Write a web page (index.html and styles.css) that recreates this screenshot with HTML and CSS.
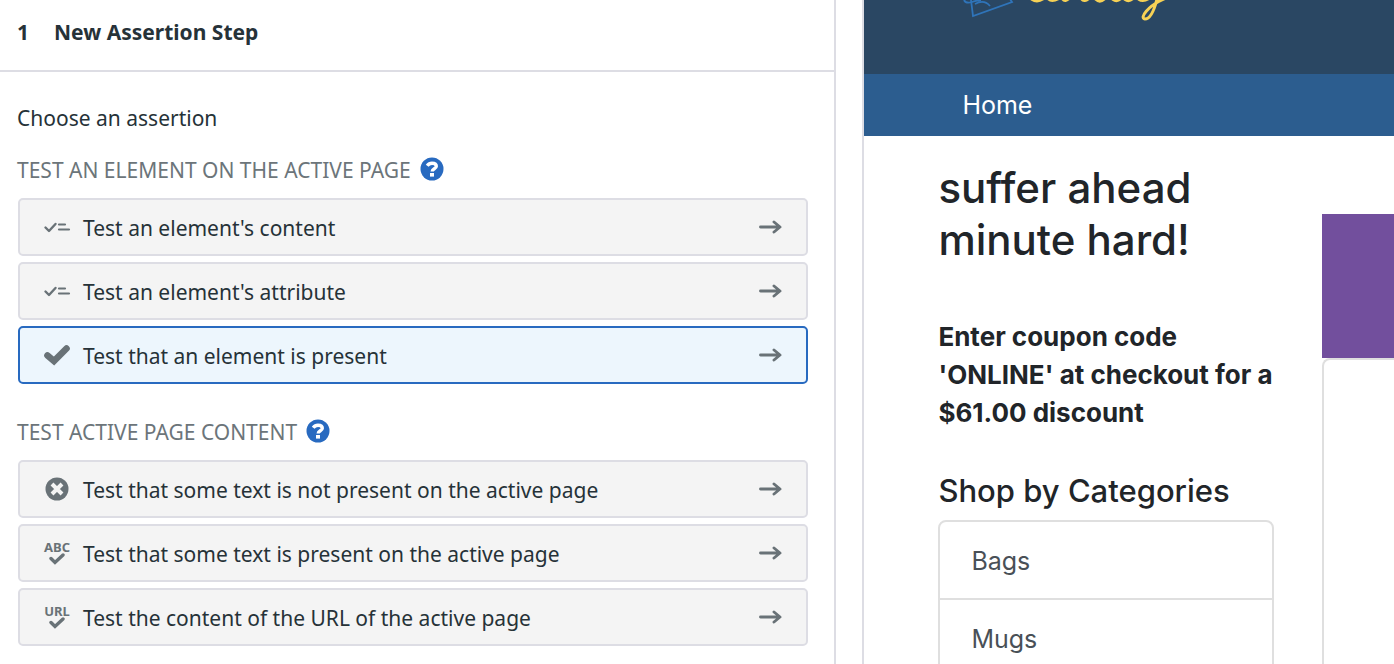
FILE: index.html
```html
<!DOCTYPE html>
<html lang="en">
<head>
<meta charset="utf-8">
<meta name="viewport" content="width=device-width, initial-scale=1">
<title>New Assertion Step</title>
<link rel="stylesheet" href="styles.css">
</head>
<body>
<svg class="sprite" aria-hidden="true">
  <symbol id="arrow" viewBox="0 0 24 24"><path d="M1.500 12H20M15 7l6 5-6 5" fill="none" stroke="currentColor" stroke-width="2.900" stroke-linejoin="round" stroke-linecap="round"/></symbol>
  <symbol id="help" viewBox="0 0 24 24"><circle cx="12" cy="12" r="11.500" fill="currentColor"/><path d="M7.200 8.700Q9 6.200 12 6.200C14.600 6.200 16.300 7.300 16.300 9.200C16.300 11.900 12.200 11.700 12.200 14.600" fill="none" stroke="#fff" stroke-width="3.400"/><rect x="10" y="16" width="4" height="3.600" fill="#fff"/></symbol>
  <symbol id="checklist" viewBox="0 0 28 24"><path d="M2.500 12.500l3.500 3.500 6.500-7" fill="none" stroke="currentColor" stroke-width="2.400" stroke-linecap="round" stroke-linejoin="round"/><path d="M16 9.500h6M16 14.500h10" stroke="currentColor" stroke-width="2.200" stroke-linecap="round"/></symbol>
  <symbol id="check" viewBox="0 0 28 24"><path d="M4.500 12.500l6.500 5.500L23.500 5.500" fill="none" stroke="currentColor" stroke-width="6.600" stroke-linecap="round" stroke-linejoin="miter"/></symbol>
  <symbol id="smallcheck" viewBox="0 0 16 12"><path d="M2 5.500l4 4L14 2" fill="none" stroke="currentColor" stroke-width="3.400" stroke-linecap="round" stroke-linejoin="miter"/></symbol>
  <symbol id="cross" viewBox="0 0 28 24"><circle cx="14" cy="12" r="11.500" fill="currentColor"/><path d="M9 7l10 10M19 7l-10 10" stroke="#f4f4f4" stroke-width="4"/></symbol>
</svg>
<div class="app">
  <main class="editor">
    <header class="editor-header"><span class="step-number">1</span><h1 class="step-title">New Assertion Step</h1></header>
    <div class="editor-body">
      <p class="prompt">Choose an assertion</p>
      <section class="group">
        <div class="group-heading"><h2 class="group-title">TEST AN ELEMENT ON THE ACTIVE PAGE</h2><button class="help" type="button" aria-label="Help with element tests"><svg class="help-icon"><use href="#help"/></svg></button></div>
        <div class="options">
          <button class="option" type="button"><span class="icon"><svg class="icon-svg"><use href="#checklist"/></svg></span><span class="label">Test an element's content</span><svg class="arrow"><use href="#arrow"/></svg></button>
          <button class="option" type="button"><span class="icon"><svg class="icon-svg"><use href="#checklist"/></svg></span><span class="label">Test an element's attribute</span><svg class="arrow"><use href="#arrow"/></svg></button>
          <button class="option selected" type="button" aria-pressed="true"><span class="icon"><svg class="icon-svg"><use href="#check"/></svg></span><span class="label">Test that an element is present</span><svg class="arrow"><use href="#arrow"/></svg></button>
        </div>
      </section>
      <section class="group">
        <div class="group-heading"><h2 class="group-title">TEST ACTIVE PAGE CONTENT</h2><button class="help" type="button" aria-label="Help with page content tests"><svg class="help-icon"><use href="#help"/></svg></button></div>
        <div class="options">
          <button class="option" type="button"><span class="icon"><svg class="icon-svg"><use href="#cross"/></svg></span><span class="label">Test that some text is not present on the active page</span><svg class="arrow"><use href="#arrow"/></svg></button>
          <button class="option" type="button"><span class="icon"><span class="icon-text">ABC</span><svg class="small-check"><use href="#smallcheck"/></svg></span><span class="label">Test that some text is present on the active page</span><svg class="arrow"><use href="#arrow"/></svg></button>
          <button class="option" type="button"><span class="icon"><span class="icon-text">URL</span><svg class="small-check"><use href="#smallcheck"/></svg></span><span class="label">Test the content of the URL of the active page</span><svg class="arrow"><use href="#arrow"/></svg></button>
        </div>
      </section>
    </div>
  </main>
  <div class="preview">
    <header class="banner">
      <svg class="logo" viewBox="0 0 210 22" aria-hidden="true">
        <g fill="none" stroke="#2f74b9" stroke-width="1.800"><path d="M9 0l2 16L50 2l-2-3"/><path d="M2 0q2 4 8 2t9-2M13 4q9-5 15 2"/></g>
        <g fill="none" stroke="#f6d155" stroke-width="3.600" stroke-linecap="round"><path d="M70-1q6 4 13-2M87-1q3 3 10-1M101-1q2 3 6-1M120-1q2 3 7-1M134-1q4 4 9-1M151-1q4 3 8-1M163-1q4 3 8-1M177-1q4 3 10-1"/><path d="M195-1Q190 19 183 19C177 18 186 6 202-1" stroke-width="3"/></g>
      </svg>
    </header>
    <nav class="site-nav"><a class="nav-link" href="#">Home</a></nav>
    <div class="shop">
      <aside class="sidebar">
        <h2 class="headline">suffer ahead minute hard!</h2>
        <p class="coupon">Enter coupon code 'ONLINE' at checkout for a $61.00 discount</p>
        <h3 class="shop-title">Shop by Categories</h3>
        <ul class="categories"><li><a class="category" href="#">Bags</a></li><li><a class="category" href="#">Mugs</a></li></ul>
      </aside>
      <div class="products"><div class="promo"></div><div class="product-card"></div></div>
    </div>
  </div>
</div>
</body>
</html>
```
FILE: styles.css
```css
* { box-sizing: border-box; }
body { margin: 0; background: #fff; color: #263238; font-family: "Noto Sans", sans-serif; font-size: 21px; line-height: 28px; }
h1, h2, h3, p, ul { margin: 0; padding: 0; }
button { font: inherit; color: inherit; cursor: pointer; }
.sprite { position: absolute; width: 0; height: 0; }
.app { display: grid; grid-template-columns: 60% 1fr; column-gap: 26px; height: 100vh; overflow: hidden; }
.editor { border-right: 2px solid #dddde4; }
.editor-header { display: flex; gap: 25px; padding: 18px 17px 24px; border-bottom: 2px solid #dddde4; font-weight: 700; }
.step-title { font-size: inherit; }
.editor-body { display: flex; flex-direction: column; padding: 32px 26px 18px 17px; }
.group { padding-top: 24px; }
.group + .group { padding-top: 34px; }
.group-heading { display: flex; align-items: center; gap: 9px; padding-bottom: 14px; }
.group-title { font-size: 21px; font-weight: 400; color: #6c757a; }
.help { display: flex; padding: 0 0 2px; border: 0; background: none; color: #286ac0; }
.help-icon { width: 24px; height: 24px; }
.options { display: flex; flex-direction: column; gap: 6px; padding-left: 1px; }
.option { display: flex; align-items: center; width: 100%; height: 58px; padding: 0 23px; border: 2px solid #dddde4; border-radius: 5px; background: #f4f4f4; text-align: left; }
.option.selected { border-color: #286ac0; background: #edf6fd; }
.icon { display: flex; flex-direction: column; align-items: center; width: 28px; margin-right: 12px; color: #697277; }
.icon-svg { width: 28px; height: 24px; }
.icon-text { font-size: 13px; line-height: 12px; font-weight: 700; }
.small-check { width: 16px; height: 12px; }
.label { flex: 1; padding-top: 1px; }
.arrow { width: 24px; height: 24px; color: #697277; }
.preview { min-width: 0; overflow: hidden; border-left: 2px solid #dddde4; font-family: Inter, sans-serif; color: #212529; }
.banner { height: 74px; padding-left: 98px; background: #2a4763; }
.logo { display: block; width: 210px; height: 22px; }
.site-nav { display: flex; padding: 16px 98px; background: #2c5d8f; }
.nav-link { color: #fff; font-size: 25px; line-height: 30px; text-decoration: none; }
.shop { display: flex; gap: 48px; padding-left: 74px; }
.sidebar { flex: none; width: 336px; padding-top: 26px; }
.headline { font-size: 42px; line-height: 52px; font-weight: 500; }
.coupon { padding: 52px 0 40px; font-size: 26px; line-height: 38px; font-weight: 700; }
.shop-title { font-size: 31px; line-height: 38px; font-weight: 500; padding-bottom: 12px; }
.categories { margin-top: -2px; list-style: none; border: 2px solid #dfdfdf; border-radius: 8px; }
.category { display: block; padding: 20px 31px 18px; color: #495057; font-size: 25px; line-height: 38px; text-decoration: none; }
.categories li + li { border-top: 2px solid #dfdfdf; }
.products { flex: 1; display: flex; flex-direction: column; padding-top: 78px; }
.promo { height: 144px; background: #724f9d; }
.product-card { flex: 1; min-height: 400px; border: 2px solid #dfdfdf; border-right: 0; border-radius: 8px 0 0 0; }
```
